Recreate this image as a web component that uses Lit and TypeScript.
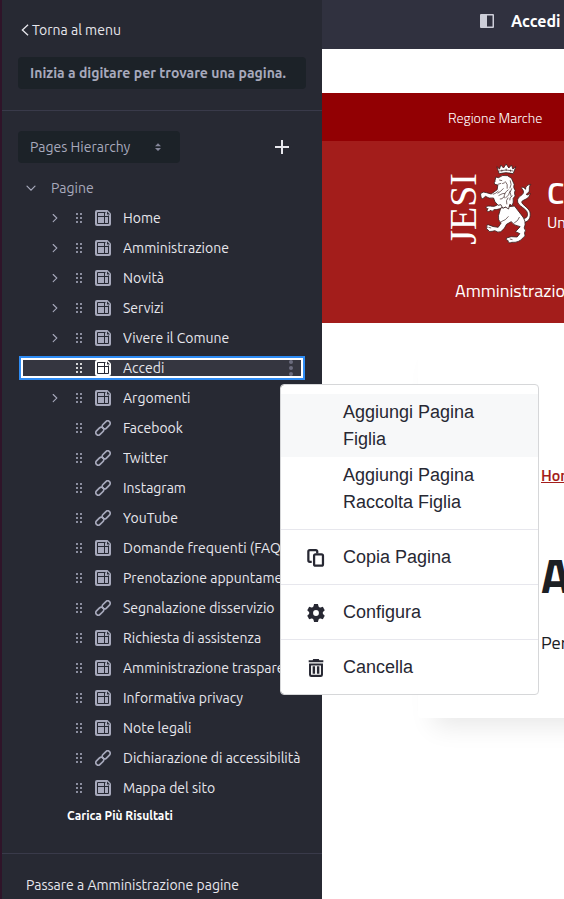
import { LitElement, html, css, svg, nothing } from "lit";
import { customElement } from "lit/decorators.js";
import { classMap } from "lit/directives/class-map.js";

interface PageNode {
  name: string;
  kind: "page" | "link";
  children?: boolean;
  selected?: boolean;
}

const PAGES: PageNode[] = [
  { name: "Home", kind: "page", children: true },
  { name: "Amministrazione", kind: "page", children: true },
  { name: "Novità", kind: "page", children: true },
  { name: "Servizi", kind: "page", children: true },
  { name: "Vivere il Comune", kind: "page", children: true },
  { name: "Accedi", kind: "page", selected: true },
  { name: "Argomenti", kind: "page", children: true },
  { name: "Facebook", kind: "link" },
  { name: "Twitter", kind: "link" },
  { name: "Instagram", kind: "link" },
  { name: "YouTube", kind: "link" },
  { name: "Domande frequenti (FAQ)", kind: "page" },
  { name: "Prenotazione appuntamento", kind: "page" },
  { name: "Segnalazione disservizio", kind: "link" },
  { name: "Richiesta di assistenza", kind: "page" },
  { name: "Amministrazione trasparente", kind: "page" },
  { name: "Informativa privacy", kind: "page" },
  { name: "Note legali", kind: "page" },
  { name: "Dichiarazione di accessibilità", kind: "link" },
  { name: "Mappa del sito", kind: "page" },
];

const glyphs = {
  chevron: svg`<path d="M6.200 4.500l3.600 3.600-3.600 3.600" fill="none" stroke="currentColor" stroke-width="1.100" stroke-linecap="round"/>`,
  chevronDown: svg`<path d="M4 6.2l4 4 4-4" fill="none" stroke="currentColor" stroke-width="1.2" stroke-linecap="round"/>`,
  drag: svg`<g fill="currentColor">${[6, 10].map((x) =>
    [4, 8, 12].map((y) => svg`<circle cx=${x} cy=${y} r="1.050"/>`)
  )}</g>`,
  page: svg`<path fill="currentColor" d="M2 0h10.500L16 3.500V14a2 2 0 0 1-2 2H2a2 2 0 0 1-2-2V2a2 2 0 0 1 2-2z"/><path fill="none" stroke="#272933" d="M10.500 2.500h-8v11h11v-8M2.500 6.500h11M9.500 2.500v11"/><path fill="#272933" d="M12 1.500v3h3z"/>`,
  link: svg`<g fill="none" stroke="currentColor" stroke-width="1.700"><rect x="-4.600" y="-2.500" width="9.200" height="5" rx="2.500" transform="translate(11.200 4.800) rotate(-45)"/><rect x="-4.600" y="-2.500" width="9.200" height="5" rx="2.500" transform="translate(4.800 11.200) rotate(-45)"/></g>`,
  kebab: svg`<g fill="currentColor"><circle cx="8" cy="2" r="2"/><circle cx="8" cy="8" r="2"/><circle cx="8" cy="14" r="2"/></g>`,
  plus: svg`<path d="M8 1v14M1 8h14" fill="none" stroke="currentColor" stroke-width="2"/>`,
  back: svg`<path d="M11.500 2L5 8l6.500 6" fill="none" stroke="currentColor" stroke-width="1.500"/>`,
  sort: svg`<path d="M8 4.200L11 7.200H5zM8 12L5 9h6z" fill="currentColor"/>`,
  panel: svg`<path fill="currentColor" fill-rule="evenodd" d="M2 1h12a1 1 0 0 1 1 1v12a1 1 0 0 1-1 1H2a1 1 0 0 1-1-1V2a1 1 0 0 1 1-1zM8 2.500v11h5.500v-11z"/>`,
  copy: svg`<g fill="none" stroke="currentColor" stroke-width="2"><path d="M4.200 11.400H2.500A1.300 1.300 0 0 1 1.200 10.100V2.300A1.300 1.300 0 0 1 2.500 1h5.300a1.300 1.300 0 0 1 1.300 1.300V4"/><rect x="6.300" y="4.800" width="7.900" height="10" rx="1.300"/></g>`,
  cog: svg`<g fill="currentColor"><path fill-rule="evenodd" d="M8 1.900a6.100 6.100 0 1 1 0 12.200A6.100 6.100 0 0 1 8 1.900zM8 5.400a2.600 2.600 0 1 0 0 5.200A2.600 2.600 0 0 0 8 5.400z"/>${[0, 60, 120, 180, 240, 300].map(
    (a) => svg`<path d="M5.400 3.400L6.300 0h3.400l.9 3.400z" transform="rotate(${a} 8 8)"/>`
  )}</g>`,
  trash: svg`<path fill="currentColor" fill-rule="evenodd" d="M5.500 0h5l.5 1h3.500v1.800h-13V1H5zM1.800 4h12.400v10a2 2 0 0 1-2 2H3.800a2 2 0 0 1-2-2zM3.600 5.800V14h8.800V5.800z"/><path fill="currentColor" d="M5 6.500h2.200v6.700H5zM8.800 6.500H11v6.700H8.800z"/>`,
};

const icon = (name: keyof typeof glyphs, cls = "icon") =>
  html`<svg class=${cls} viewBox="0 0 16 16" aria-hidden="true">${glyphs[name]}</svg>`;

const lion = html`<svg class="lion" viewBox="470 488 158 246" aria-hidden="true">
  <g fill="#fff" stroke="#3a2020" stroke-width="2.500" stroke-linejoin="round">
    <path d="M523 499l7 21q20-6 42 0l8-21-9 7-4-12-8 9-8-12-8 12-8-9-4 12z" />
    <path d="M530 512q20-6 42 0M538 514v-6M551 512v-7M564 514v-6" fill="none" stroke-width="2" />
    <path d="M594 654q22 4 21-14c-1-16-30-22-30-38 0-15 17-16 18-26 1-8-9-12-5-15 4-2 9 2 11 6 0-9 5-14 16-15-8 9-2 17-6 23-3 5-9 5-7 8 3 2 9-1 11-4-1 14-15 18-22 22-14 7 20 20 22 37 2 20-9 29-24 28z" />
    <path d="M535 622l-7 24q-3 14 8 22l-9 13q-16-1-30-8-8 1-3 8-6 5 3 8 0 7 12 4l8-2q9 7 18 3 12-8 17-22l14-8q8 12 27 15l-14 15 13 6-8 10-18-1-14 4q-4 6 5 8-1 10 11 5 21 2 34-14 9-4 4-14 6-8-1-15 9-20-9-40l-20-26z" />
    <path d="M536 604c-10 10-18 15-27 14-7-1-14-2-18 2-2 4 3 5 6 5-4 4-5 8 0 9 3 0 6-3 8-4 2 4 7 3 9-2 12 1 24-4 33-13z" />
    <path d="M517 543l3-13 8 2q12-10 27-6l12 8 8 18q-4 10 3 18-4 8 0 17l-6 7q2 12-3 22l-7-4-4 14-9-6-8 4-6-11-8 2q-12-10-14-22-14 3-24-5l-8 7q-6 1-6-8l-1-7q8-8 18-3l14 4 18-13 2-14-9-2q-4-6 1-8z" />
    <path d="M539 550l8-3M530 539l9 2M526 552l10-3M548 543q9 8 6 22M563 540q6 12-1 24M543 564q-8 10-18 15M558 568q-14 9-13 25M568 564q-9 12-2 24M528 586q12-8 20-7M548 594q13-9 15-23M562 600q-3-8 8-14M532 596q8 2 12-7M553 612q-4-12 4-20M528 572q-8 8-17 10M536 664q14-4 22-16M575 668q12-6 16-18M498 681l8 2M562 716l8 2" fill="none" stroke-width="2" />
  </g>
</svg>`;

@customElement("app-root")
export class AppRoot extends LitElement {
  static styles = css`
    :host {
      display: grid;
      grid-template-columns: 322px minmax(0, 1fr);
      position: relative;
      min-height: 100vh;
      overflow: hidden;
      background: #fff;
      font: 14px/20px Ubuntu, "Noto Sans", sans-serif;
    }
    * {
      box-sizing: border-box;
    }
    button,
    input,
    select {
      font: inherit;
      color: inherit;
      border: 0;
      padding: 0;
      margin: 0;
      background: none;
    }
    a {
      color: inherit;
      text-decoration: none;
    }
    ul {
      list-style: none;
      margin: 0;
      padding: 0;
    }
    .icon {
      display: block;
      width: 16px;
      height: 16px;
    }
    .sidebar {
      background: #272933;
      border-left: 2px solid #2f1429;
      color: #e7e7ed;
    }
    .top {
      display: flex;
      flex-direction: column;
      gap: 17px;
      padding: 20px 16px 21px;
      border-bottom: 1px solid #393a4a;
    }
    .back {
      display: flex;
      align-items: center;
    }
    .back .icon {
      width: 14px;
    }
    .search {
      width: 100%;
      height: 32px;
      padding: 0 12px;
      border-radius: 4px;
      background: #1c2228;
      font-weight: 700;
    }
    .search::placeholder {
      color: #a7a9bc;
      opacity: 1;
    }
    .tools {
      display: flex;
      align-items: center;
      justify-content: space-between;
      padding: 20px 16px 13px;
    }
    .picker {
      display: grid;
      align-items: center;
      width: 162px;
      color: #a7a9bc;
    }
    .picker select {
      grid-area: 1 / 1;
      height: 32px;
      padding: 0 12px;
      border-radius: 4px;
      background: #1c2228;
      appearance: none;
    }
    .picker .icon {
      grid-area: 1 / 1;
      justify-self: end;
      margin-right: 14px;
      color: #85869a;
      pointer-events: none;
    }
    .add {
      margin-right: 16px;
    }
    .tree {
      display: flex;
      flex-direction: column;
      gap: 6px;
      padding: 0 17px;
    }
    .row {
      display: flex;
      align-items: center;
      gap: 8px;
      height: 24px;
      padding-left: 28px;
      color: #a7a9bc;
      white-space: nowrap;
    }
    .root {
      gap: 12px;
      padding-left: 4px;
    }
    .slot {
      flex: none;
      width: 16px;
    }
    .label {
      flex: 1;
      min-width: 0;
      overflow: hidden;
      margin-left: 4px;
      color: #e7e7ed;
    }
    .selected {
      background: #353640;
      color: #fff;
      box-shadow: inset 0 0 0 2px #2e8cf5, inset 0 0 0 4px #fff;
      padding-right: 6px;
    }
    .kebab {
      color: #6b6c7e;
    }
    .more {
      display: block;
      margin: 8px 0 29px 65px;
      font-size: 12px;
      line-height: 16px;
      font-weight: 700;
      color: #fff;
    }
    .foot {
      border-top: 1px solid #393a4a;
      padding: 21px 24px 4px;
    }
    .site {
      overflow: hidden;
      white-space: nowrap;
      font-family: "Titillium Web", Lato, sans-serif;
      color: #fff;
    }
    .bar {
      display: flex;
      align-items: center;
      gap: 16px;
      height: 49px;
      padding: 0 0 8px 157px;
      background: #30313f;
      font: 700 16px/20px Ubuntu, "Noto Sans", sans-serif;
    }
    .bar .icon {
      color: #cdced9;
    }
    .region {
      margin-top: 44px;
      height: 48px;
      padding-left: 126px;
      background: #920003;
      line-height: 50px;
      font-weight: 300;
    }
    .hero {
      height: 182px;
      padding: 22px 0 0 126px;
      background: #a31d1b;
    }
    .brand {
      display: flex;
      align-items: center;
      height: 82px;
    }
    .jesi {
      writing-mode: vertical-rl;
      rotate: 180deg;
      align-self: end;
      width: 31px;
      font: 38px/31px "Liberation Serif", serif;
    }
    .lion {
      flex: none;
      width: 53px;
      height: 82px;
    }
    .names {
      display: flex;
      flex-direction: column;
      margin-left: 15px;
      font-size: 16px;
      line-height: 24px;
    }
    .names strong {
      font-size: 32px;
      line-height: 36px;
      font-weight: 600;
    }
    .nav {
      display: block;
      margin: 34px 0 0 7px;
      font-size: 18px;
      line-height: 24px;
    }
    .card {
      margin: 0 -96px 0 96px;
      height: 395px;
      padding: 140px 0 0 123px;
      border-radius: 4px;
      color: #1c2024;
      font-size: 18px;
      line-height: 24px;
      box-shadow: 0 24px 24px -16px #00000018;
    }
    .crumb {
      color: #a31d1b;
      font-size: 16px;
      font-weight: 600;
      text-decoration: underline;
    }
    h1 {
      margin: 59px 0 25px;
      font-size: 48px;
      line-height: 60px;
      font-weight: 700;
    }
    p {
      margin: 0;
    }
    .menu {
      position: absolute;
      left: 280px;
      top: 384px;
      width: 259px;
      border: 1px solid #d6d7d9;
      border-radius: 4px;
      background: #fff;
      background-clip: padding-box;
      color: #272833;
      font: 18px/27px "Liberation Sans", Arial, sans-serif;
    }
    .group {
      padding: 9px 0;
    }
    .group + .group {
      border-top: 1px solid #e7e7ed;
    }
    .item {
      display: flex;
      align-items: center;
      gap: 18px;
      width: 100%;
      padding: 5px 24px 4px 26px;
      text-align: left;
    }
    .item .icon,
    .item .slot {
      flex: none;
      width: 18px;
      height: 18px;
    }
    .active {
      background: #f7f8f9;
    }
  `;

  private row(p: PageNode) {
    return html`<li class=${classMap({ row: true, selected: !!p.selected })}>
      ${p.children
        ? html`<button class="slot" aria-label="Espandi ${p.name}">${icon("chevron")}</button>`
        : html`<span class="slot"></span>`}
      ${icon("drag")} ${icon(p.kind)}
      <a class="label" href="#">${p.name}</a>
      ${p.selected
        ? html`<button class="kebab" aria-label="Opzioni">${icon("kebab")}</button>`
        : nothing}
    </li>`;
  }

  private item(text: string, name?: "copy" | "cog" | "trash", active = false) {
    return html`<li>
      <button class=${classMap({ item: true, active })}>
        ${name ? icon(name) : html`<span class="slot"></span>`}
        <span>${text}</span>
      </button>
    </li>`;
  }

  render() {
    return html`
      <aside class="sidebar">
        <div class="top">
          <a class="back" href="#">${icon("back")}Torna al menu</a>
          <input
            class="search"
            type="text"
            aria-label="Cerca una pagina"
            placeholder="Inizia a digitare per trovare una pagina."
          />
        </div>
        <div class="tools">
          <label class="picker">
            <select aria-label="Vista">
              <option>Pages Hierarchy</option>
            </select>
            ${icon("sort")}
          </label>
          <button class="add" aria-label="Aggiungi">${icon("plus")}</button>
        </div>
        <ul class="tree">
          <li class="row root">
            <button aria-label="Comprimi">${icon("chevronDown")}</button>
            <span>Pagine</span>
          </li>
          ${PAGES.map((p) => this.row(p))}
        </ul>
        <button class="more">Carica Più Risultati</button>
        <div class="foot"><a href="#">Passare a Amministrazione pagine</a></div>
      </aside>

      <main class="site">
        <div class="bar">${icon("panel")}<span>Accedi</span></div>
        <div class="region">Regione Marche</div>
        <header class="hero">
          <div class="brand">
            <span class="jesi">JESI</span>
            ${lion}
            <div class="names"><strong>Comune di Jesi</strong><span>Un</span></div>
          </div>
          <a class="nav" href="#">Amministrazione</a>
        </header>
        <section class="card">
          <a class="crumb" href="#">Home</a>
          <h1>Accedi</h1>
          <p>Per</p>
        </section>
      </main>

      <div class="menu">
        <ul class="group">
          ${this.item("Aggiungi Pagina Figlia", undefined, true)}
          ${this.item("Aggiungi Pagina Raccolta Figlia")}
        </ul>
        <ul class="group">${this.item("Copia Pagina", "copy")}</ul>
        <ul class="group">${this.item("Configura", "cog")}</ul>
        <ul class="group">${this.item("Cancella", "trash")}</ul>
      </div>
    `;
  }
}
